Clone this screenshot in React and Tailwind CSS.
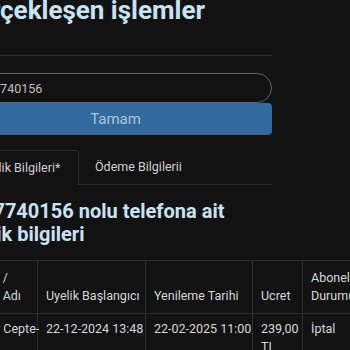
import React from "react";

const cell = "border border-[#2e2e2e] px-[8px] py-[8px]";

function Tabs() {
  return (
    <div className="flex mt-[15px] h-[35px] text-[12.5px] text-[#d0d0d0]">
      <div className="w-[120px] border border-b-0 border-[#2c2c2c] rounded-t-[4px] flex items-center pl-[18px]">
        Üyelik Bilgileri*
      </div>
      <div className="flex-1 border-b border-[#2c2c2c] flex items-center pl-[16px]">
        Ödeme Bilgilerii
      </div>
    </div>
  );
}

export default function App() {
  return (
    <div className="w-[350px] h-[350px] overflow-hidden bg-[#121212] font-['Roboto',sans-serif]">
      <div className="ml-[-41px] w-[313px]">
        <h1 className="mt-[-5px] text-[26px] leading-[30px] font-bold text-[#c9e2f6]">
          Gerçekleşen işlemler
        </h1>
        <hr className="mt-[30px] border-t border-[#333]" />
        <input
          readOnly
          value="5327740156"
          className="mt-[17px] block w-full h-[30px] rounded-full border border-[#666] bg-transparent px-[12px] text-[12.5px] text-[#c0c0c0] outline-none"
        />
        <button className="block w-full h-[32px] rounded-[4px] bg-[#336a9e] text-[15px] text-[#aec3d6]">
          Tamam
        </button>
        <Tabs />
        <h2 className="mt-[15px] text-[20px] leading-[23px] font-bold text-[#c9e2f6]">
          5327740156 nolu telefona ait üyelik bilgileri
        </h2>
        <table className="mt-[14px] w-[420px] table-fixed border-collapse text-[12.5px] leading-[18px] text-[#d6d6d6]">
          <colgroup>
            <col className="w-[78px]" />
            <col className="w-[108px]" />
            <col className="w-[107px]" />
            <col className="w-[50px]" />
            <col className="w-[77px]" />
          </colgroup>
          <thead>
            <tr>
              <th className={`${cell} font-normal text-left align-bottom whitespace-nowrap`}>
                Paket /<br />Paket Adı
              </th>
              <th className={`${cell} font-normal text-left align-bottom whitespace-nowrap`}>
                Uyelik Başlangıcı
              </th>
              <th className={`${cell} font-normal text-left align-bottom whitespace-nowrap`}>
                Yenileme Tarihi
              </th>
              <th className={`${cell} font-normal text-left align-bottom whitespace-nowrap`}>
                Ucret
              </th>
              <th className={`${cell} font-normal text-left align-bottom whitespace-nowrap`}>
                Abonelik<br />Durumu
              </th>
            </tr>
          </thead>
          <tbody>
            <tr>
              <td className={`${cell} pt-[6px] align-top whitespace-nowrap`}>Süper Cepte-<br />Paket</td>
              <td className={`${cell} pt-[6px] align-top whitespace-nowrap`}>22-12-2024 13:48</td>
              <td className={`${cell} pt-[6px] align-top whitespace-nowrap`}>22-02-2025 11:00</td>
              <td className={`${cell} pt-[6px] align-top whitespace-nowrap`}>239,00<br />TL</td>
              <td className={`${cell} pt-[6px] align-top whitespace-nowrap`}>İptal</td>
            </tr>
          </tbody>
        </table>
      </div>
    </div>
  );
}
